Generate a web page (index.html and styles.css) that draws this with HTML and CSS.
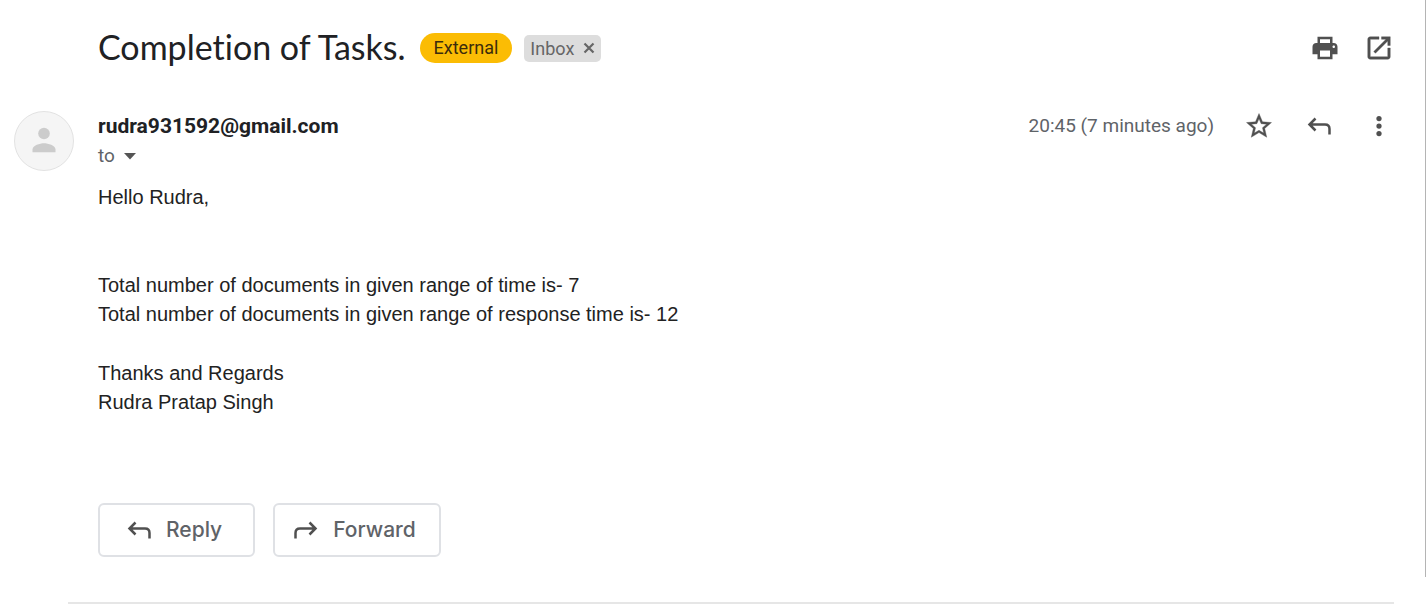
FILE: index.html
```html
<!DOCTYPE html>
<html lang="en">
<head>
<meta charset="utf-8">
<meta name="viewport" content="width=device-width, initial-scale=1">
<title>Completion of Tasks.</title>
<link rel="stylesheet" href="styles.css">
</head>
<body>
<main class="thread">
  <header class="subject">
    <h1 class="subject-title">Completion of Tasks.</h1>
    <span class="badge-external">External</span>
    <span class="label">Inbox
      <button class="label-remove" type="button" aria-label="Remove label Inbox"><svg viewBox="0 0 12 12" width="12" height="12"><path d="M1.500 1.500l9 9M10.500 1.500l-9 9" fill="none" stroke="#666" stroke-width="2.200"/></svg></button>
    </span>
    <div class="subject-tools">
      <button class="icon-button" type="button" aria-label="Print all"><svg class="icon" viewBox="0 0 24 24"><path d="M19 8h-1V3H6v5H5c-1.660 0-3 1.340-3 3v6h4v4h12v-4h4v-6c0-1.660-1.340-3-3-3zM8 5h8v3H8V5zm8 14H8v-5h8v5zm3-7c-.550 0-1-.450-1-1s.450-1 1-1 1 .450 1 1-.450 1-1 1z"/></svg></button>
      <button class="icon-button" type="button" aria-label="Open in new window"><svg class="icon" viewBox="0 0 24 24"><path stroke="#505050" stroke-width=".3" d="M19 19H5V5h7V3H5c-1.110 0-2 .9-2 2v14c0 1.100.890 2 2 2h14c1.100 0 2-.9 2-2v-7h-2v7zM14 3v2h3.590l-9.830 9.830 1.410 1.410L19 6.410V10h2V3h-7z"/></svg></button>
    </div>
  </header>

  <article class="message">
    <svg class="avatar" viewBox="0 0 60 60" role="img" aria-label="Sender"><circle cx="30" cy="30" r="29.500" fill="#f5f5f5" stroke="#e2e2e2"/><circle cx="30" cy="22.500" r="5.800" fill="#ccc"/><path d="M18.500 41.300v-2.800c0-4 7.500-6.200 11.500-6.200s11.500 2.200 11.500 6.200v2.800z" fill="#ccc"/></svg>
    <div class="message-main">
      <div class="message-head">
        <h2 class="sender">rudra931592@gmail.com</h2>
        <time class="sent">20:45 (7 minutes ago)</time>
        <div class="message-tools">
          <button class="icon-button" type="button" aria-label="Star"><svg class="icon" viewBox="0 0 24 24"><path stroke="#505050" stroke-width=".3" d="M22 9.240l-7.190-.620L12 2 9.190 8.630 2 9.240l5.460 4.730L5.820 21 12 17.270 18.180 21l-1.630-7.030L22 9.240zM12 15.400l-3.760 2.270 1-4.280-3.320-2.880 4.380-.380L12 6.100l1.710 4.040 4.380.380-3.320 2.880 1 4.280L12 15.400z"/></svg></button>
          <button class="icon-button" type="button" aria-label="Reply"><svg class="icon-arrow" viewBox="0 0 24 18"><path d="M8.500 1.500L2.500 7.500l6 6M3 7.500H18q4.500 0 4.500 4.500v5.500"/></svg></button>
          <button class="icon-button" type="button" aria-label="More"><svg class="icon" viewBox="0 0 24 24"><circle cx="12" cy="6" r="2.100"/><circle cx="12" cy="12" r="2.100"/><circle cx="12" cy="18" r="2.100"/></svg></button>
        </div>
      </div>
      <button class="recipients" type="button">to <svg viewBox="0 0 12 7" width="12" height="7"><path d="M0 0h12L6 6.500z" fill="#555"/></svg></button>
      <div class="message-body">
        <p class="greeting">Hello Rudra,</p>
        <p>Total number of documents in given range of time is- 7<br>Total number of documents in given range of response time is- 12</p>
        <p class="signature">Thanks and Regards<br>Rudra Pratap Singh</p>
      </div>
      <div class="actions">
        <button class="action" type="button"><svg class="icon-arrow" viewBox="0 0 24 18"><path d="M8.500 1.500L2.500 7.500l6 6M3 7.500H18q4.500 0 4.500 4.500v5.500"/></svg>Reply</button>
        <button class="action action-forward" type="button"><svg class="icon-arrow" viewBox="0 0 24 18"><path d="M15.500 1.500L21.500 7.500l-6 6M21 7.500H6q-4.500 0-4.500 4.500v5.500"/></svg>Forward</button>
      </div>
    </div>
  </article>
</main>
<hr class="divider">
</body>
</html>
```
FILE: styles.css
```css
* { box-sizing: border-box; }

body {
  margin: 0;
  background: #fff;
  color: #202124;
  font-family: Roboto, "Liberation Sans", sans-serif;
}

button {
  margin: 0;
  padding: 0;
  border: 0;
  background: none;
  color: inherit;
  font: inherit;
  cursor: pointer;
}

h1, h2, p { margin: 0; }

.thread {
  padding: 18px 28px 20px 14px;
  border-right: 1px solid #b4b4b4;
}

.subject {
  display: flex;
  align-items: center;
  min-height: 60px;
  padding-left: 84px;
}

.subject-title {
  margin-right: 14px;
  padding-bottom: 2px;
  font: 400 34px/44px Lato, sans-serif;
  font-variant-ligatures: none;
}

.badge-external {
  margin-right: 12px;
  padding: 0 14px;
  border-radius: 15px;
  background: #fbbc04;
  color: #3c2c0c;
  font-size: 18px;
  line-height: 30px;
}

.label {
  display: flex;
  align-items: center;
  gap: 9px;
  padding: 0 6px;
  border-radius: 5px;
  background: #ddd;
  color: #666;
  font-size: 18px;
  line-height: 27px;
}

.label-remove { display: flex; }

.subject-tools {
  display: flex;
  gap: 18px;
  margin-left: auto;
}

.icon-button {
  display: flex;
  align-items: center;
  justify-content: center;
  width: 36px;
  height: 30px;
}

.icon {
  width: 30px;
  height: 30px;
  fill: #505050;
}

.icon-arrow {
  width: 24px;
  height: 18px;
  fill: none;
  stroke: #505050;
  stroke-width: 2.500px;
}

.message {
  display: grid;
  grid-template-columns: 60px 1fr;
  column-gap: 24px;
  margin-top: 33px;
}

.avatar {
  width: 60px;
  height: 60px;
}

.message-head {
  display: flex;
  align-items: center;
}

.sender {
  font-size: 21px;
  line-height: 30px;
  font-weight: 700;
}

.sent {
  margin-left: auto;
  margin-right: 27px;
  color: #5f6368;
  font-size: 19px;
  line-height: 30px;
}

.message-tools {
  display: flex;
  gap: 24px;
}

.recipients {
  display: flex;
  align-items: center;
  gap: 9px;
  color: #5f6368;
  font-size: 19px;
  line-height: 30px;
}

.message-body {
  margin-top: 12px;
  color: #222;
  font: 20px/29px "Liberation Sans", Arial, sans-serif;
}

.greeting { margin-bottom: 59px; }

.signature { margin-top: 30px; }

.actions {
  display: flex;
  gap: 18px;
  margin-top: 86px;
}

.action {
  display: flex;
  align-items: center;
  gap: 15px;
  height: 54px;
  padding: 0 31px 0 27px;
  border: 2px solid #dfe1e5;
  border-radius: 6px;
  color: #5f6368;
  font: 500 21px/30px Inter, sans-serif;
}

.action-forward { padding: 0 23px 0 19px; }

.divider {
  margin: 25px 32px 0 68px;
  border: 0;
  border-top: 2px solid #e6e6e6;
}
```
